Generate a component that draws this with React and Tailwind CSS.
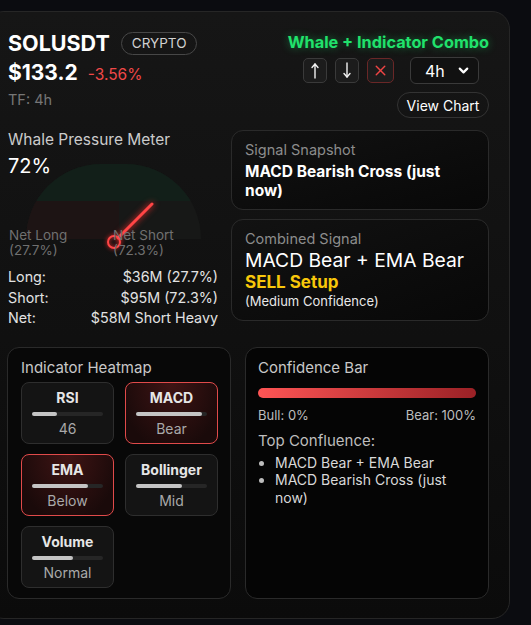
import { ChevronDown, X } from 'lucide-react';

const tiles = [
    { name: 'RSI', value: '46', fill: 35, active: false },
    { name: 'MACD', value: 'Bear', fill: 93, active: true },
    { name: 'EMA', value: 'Below', fill: 79, active: true },
    { name: 'Bollinger', value: 'Mid', fill: 65, active: false },
    { name: 'Volume', value: 'Normal', fill: 58, active: false }
];

function Arrow({ down }) {
    return (
        <svg width="10" height="17" viewBox="0 0 10 17" fill="none">
            <g
                stroke="#f2f2f2"
                strokeWidth="1.4"
                strokeLinecap="round"
                strokeLinejoin="round"
                transform={down ? 'rotate(180 5 8.5)' : undefined}
            >
                <path d="M5 2v14" />
                <path d="M2 5.5 5 2l3 3.5" />
            </g>
        </svg>
    );
}

function HeatTile({ tile }) {
    return (
        <div
            className={
                tile.active
                    ? 'flex h-[62px] flex-col items-center rounded-[8px] border border-[#e04a4a] bg-[radial-gradient(ellipse_at_50%_0%,#3f1414,#1a0a0a_80%)] px-[10px] pt-[6px]'
                    : 'flex h-[62px] flex-col items-center rounded-[8px] border border-[#2e2e2e] bg-[#141414] px-[10px] pt-[6px]'
            }
        >
            <div className="text-[14px] font-bold leading-[18px] text-[#e6e6e6]">
                {tile.name}
            </div>
            <div className="mt-[5px] h-[4px] w-full rounded-full bg-[#262626]">
                <div
                    className="h-full rounded-full bg-[#c4c4c4]"
                    style={{ width: `${tile.fill}%` }}
                />
            </div>
            <div className="mt-[4px] text-[14px] leading-[18px] text-[#a9a9a9]">
                {tile.value}
            </div>
        </div>
    );
}

function Gauge() {
    return (
        <div className="relative mt-[-15px] h-[97px]">
            <div className="absolute left-[18px] top-0 h-[75px] w-[175px] overflow-hidden rounded-t-[90px] bg-[#171817]">
                <div className="h-[37px] w-full bg-[#121f19]" />
                <div className="h-[38px] w-[93px] bg-[#1d1414]" />
            </div>
            <svg
                className="absolute left-0 top-0"
                width="213"
                height="97"
                viewBox="0 0 213 97"
            >
                <line
                    x1="110"
                    y1="74"
                    x2="144"
                    y2="40"
                    stroke="#ff4545"
                    strokeWidth="3"
                    strokeLinecap="round"
                    style={{ filter: 'drop-shadow(0 0 3px #ff2d2d)' }}
                />
                <circle
                    cx="106"
                    cy="78"
                    r="6"
                    fill="none"
                    stroke="#ff4545"
                    strokeWidth="2"
                    style={{ filter: 'drop-shadow(0 0 2px #ff2d2d)' }}
                />
            </svg>
            <div className="absolute left-[1px] top-[64px] text-[13.5px] leading-[15px] text-[#707070]">
                Net Long
                <br />
                (27.7%)
            </div>
            <div className="absolute left-[105px] top-[64px] text-[13.5px] leading-[15px] text-[#707070]">
                Net Short
                <br />
                (72.3%)
            </div>
        </div>
    );
}

export default function App() {
    return (
        <div className="min-h-[625px] overflow-hidden bg-[#0b0c10] pt-[11px] font-['Inter',sans-serif]">
            <div className="ml-[-14px] h-[608px] w-[524px] rounded-[18px] border border-[#262626] bg-gradient-to-b from-[#161616] to-[#0b0b0b] px-[20px] pt-[17px]">
                <div className="flex justify-between">
                    <div className="pl-[1px]">
                        <div className="flex items-center gap-[11px]">
                            <span className="text-[21.5px] font-bold leading-[28px] text-white">
                                SOLUSDT
                            </span>
                            <span className="flex h-[23px] items-center rounded-full border border-[#474747] px-[10px] text-[13.5px] text-[#d2d2d2]">
                                CRYPTO
                            </span>
                        </div>
                        <div className="mt-[3px] flex items-baseline gap-[10px]">
                            <span className="text-[21px] font-bold leading-[26px] text-white">
                                $133.2
                            </span>
                            <span className="text-[15.5px] text-[#f04848]">
                                -3.56%
                            </span>
                        </div>
                        <div className="mt-[4px] text-[14.5px] leading-[20px] text-[#767676]">
                            TF: 4h
                        </div>
                    </div>
                    <div className="flex flex-col items-end pt-[3px]">
                        <div className="text-[16.3px] font-bold leading-[20px] text-[#20e26c] [text-shadow:0_0_8px_rgba(32,226,108,0.45)]">
                            Whale + Indicator Combo
                        </div>
                        <div className="mr-[10px] mt-[5px] flex items-center">
                            <button className="flex h-[25px] w-[24px] items-center justify-center rounded-[5px] border border-[#3a3a3a] bg-[#1c1c1c]">
                                <Arrow />
                            </button>
                            <button className="ml-[8px] flex h-[25px] w-[24px] items-center justify-center rounded-[5px] border border-[#3a3a3a] bg-[#1c1c1c]">
                                <Arrow down />
                            </button>
                            <button className="ml-[8px] flex h-[25px] w-[27px] items-center justify-center rounded-[5px] border border-[#6a2727] bg-[#1c1c1c] text-[#f04444]">
                                <X size={17} strokeWidth={2} />
                            </button>
                            <div className="ml-[16px] flex h-[27px] w-[69px] items-center justify-between rounded-[6px] border border-[#3a3a3a] bg-[#111111] pl-[14px] pr-[7px] text-[16px] text-white">
                                4h
                                <ChevronDown size={15} strokeWidth={3.5} />
                            </div>
                        </div>
                        <button className="mt-[8px] flex h-[26px] w-[92px] items-center justify-center rounded-full border border-[#333333] text-[14px] text-white">
                            View Chart
                        </button>
                    </div>
                </div>

                <div className="mt-[12px] flex gap-[11px]">
                    <div className="w-[213px] pl-[1px]">
                        <div className="text-[15.5px] leading-[20px] text-[#cbcbcb]">
                            Whale Pressure Meter
                        </div>
                        <div className="mt-[3px] text-[20px] leading-[26px] text-white">
                            72%
                        </div>
                        <Gauge />
                        <div className="mt-[6px] pr-[2px] text-[14.3px] leading-[20.5px] text-[#e2e2e2]">
                            <div className="flex justify-between">
                                <span>Long:</span>
                                <span>$36M (27.7%)</span>
                            </div>
                            <div className="flex justify-between">
                                <span>Short:</span>
                                <span>$95M (72.3%)</span>
                            </div>
                            <div className="flex justify-between">
                                <span>Net:</span>
                                <span>$58M Short Heavy</span>
                            </div>
                        </div>
                    </div>
                    <div className="flex w-[258px] flex-col gap-[9px]">
                        <div className="h-[80px] rounded-[12px] border border-[#2a2a2a] bg-gradient-to-br from-[#121212] to-[#080808] px-[13px] pt-[10px]">
                            <div className="text-[14.5px] leading-[18px] text-[#8c8c8c]">
                                Signal Snapshot
                            </div>
                            <div className="mt-[3px] text-[15.5px] font-bold leading-[19px] text-white">
                                MACD Bearish Cross (just now)
                            </div>
                        </div>
                        <div className="h-[102px] rounded-[12px] border border-[#2a2a2a] bg-gradient-to-br from-[#121212] to-[#080808] px-[13px] pt-[10px]">
                            <div className="text-[14.5px] leading-[18px] text-[#8c8c8c]">
                                Combined Signal
                            </div>
                            <div className="text-[19.3px] leading-[24px] text-white">
                                MACD Bear + EMA Bear
                            </div>
                            <div className="text-[17px] font-bold leading-[21px] text-[#f8c70a]">
                                SELL Setup
                            </div>
                            <div className="text-[13px] leading-[16px] text-[#e8e8e8]">
                                (Medium Confidence)
                            </div>
                        </div>
                    </div>
                </div>

                <div className="mt-[18px] flex gap-[14px]">
                    <div className="h-[252px] w-[224px] rounded-[12px] border border-[#2a2a2a] bg-[#080808] px-[13px] pt-[10px]">
                        <div className="text-[15px] leading-[20px] text-[#c8c8c8]">
                            Indicator Heatmap
                        </div>
                        <div className="mt-[4px] grid w-[197px] grid-cols-2 gap-x-[11px] gap-y-[10px]">
                            {tiles.map((tile) => (
                                <HeatTile key={tile.name} tile={tile} />
                            ))}
                        </div>
                    </div>
                    <div className="h-[252px] w-[244px] rounded-[12px] border border-[#2a2a2a] bg-[#050505] px-[12px] pt-[10px]">
                        <div className="text-[15px] leading-[20px] text-[#c8c8c8]">
                            Confidence Bar
                        </div>
                        <div className="mt-[10px] h-[10px] w-full rounded-full bg-gradient-to-r from-[#ff5555] to-[#9b2126]" />
                        <div className="mt-[9px] flex justify-between text-[13px] leading-[16px] text-[#bdbdbd]">
                            <span>Bull: 0%</span>
                            <span>Bear: 100%</span>
                        </div>
                        <div className="mt-[8px] text-[15px] leading-[20px] text-[#bdbdbd]">
                            Top Confluence:
                        </div>
                        <ul className="mt-[3px] list-disc pl-[17px] text-[14px] leading-[17.5px] text-[#d8d8d8] marker:text-[#bdbdbd]">
                            <li>MACD Bear + EMA Bear</li>
                            <li>MACD Bearish Cross (just now)</li>
                        </ul>
                    </div>
                </div>
            </div>
        </div>
    );
}
